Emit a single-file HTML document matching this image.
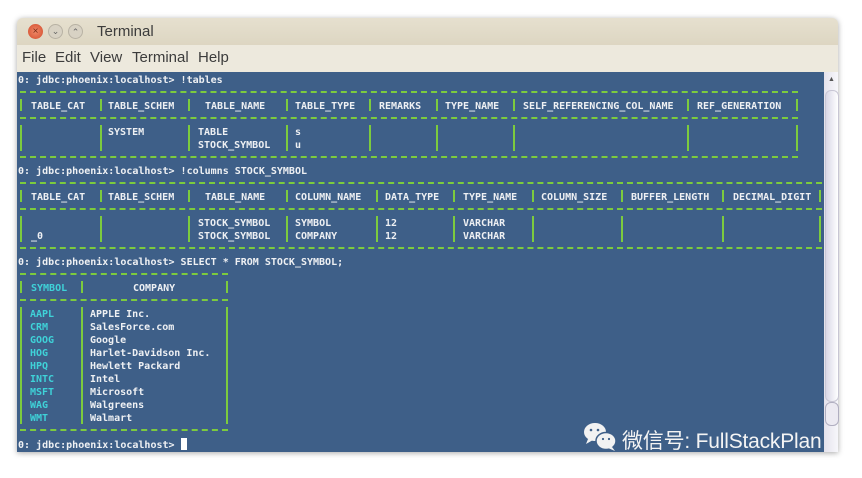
<!DOCTYPE html><html><head><meta charset="utf-8"><style>
body{margin:0;width:862px;height:478px;background:#fff;position:relative;overflow:hidden;font-family:"Liberation Sans",sans-serif}
#win{position:absolute;left:17px;top:18px;width:821px;height:434px;background:#ece8dc;border-radius:6px 6px 0 0;box-shadow:0 1px 6px rgba(0,0,0,.35)}
#title{position:absolute;left:0;top:0;width:821px;height:27px;background:linear-gradient(#e6e0cf,#ddd6c2);border-radius:6px 6px 0 0}
#menu{position:absolute;left:0;top:27px;width:821px;height:27px;background:#ede9dd;font-size:15px;color:#3c3c3c}
#term{position:absolute;left:17px;top:72px;width:807px;height:380px;background:#3e5f88;overflow:hidden;font-family:"DejaVu Sans Mono","Liberation Mono",monospace;font-weight:bold;font-size:10px;color:#eef0f3}
.t{position:absolute;line-height:13px;white-space:pre;margin-top:2px}
.c{color:#3fd2d8}
.h{position:absolute;height:0;border-top:2px dashed #7ccb3e}
.v{position:absolute;width:2px;background:#7ccb3e}
#sb{position:absolute;left:824px;top:72px;width:14px;height:380px;background:linear-gradient(90deg,#e4e2ec,#f7f7fb)}
</style></head><body>
<div id="win">
<div id="title">
<div style="position:absolute;left:11px;top:6px;width:15px;height:15px;border-radius:50%;background:radial-gradient(#f08a6a,#d24a2a);color:#7a2a15;font-size:10px;text-align:center;line-height:15px">×</div>
<div style="position:absolute;left:31px;top:6px;width:15px;height:15px;border-radius:50%;background:#d8d2c4;border:1px solid #b8b2a4;box-sizing:border-box;color:#666;font-size:9px;text-align:center;line-height:13px">⌄</div>
<div style="position:absolute;left:51px;top:6px;width:15px;height:15px;border-radius:50%;background:#d8d2c4;border:1px solid #b8b2a4;box-sizing:border-box;color:#666;font-size:9px;text-align:center;line-height:15px">⌃</div>
<div style="position:absolute;left:80px;top:5px;font-size:15px;color:#3c3c3c">Terminal</div>
</div>
<div id="menu"><span style="position:absolute;left:5px;top:4px">File</span><span style="position:absolute;left:38px;top:4px">Edit</span><span style="position:absolute;left:73px;top:4px">View</span><span style="position:absolute;left:115px;top:4px">Terminal</span><span style="position:absolute;left:181px;top:4px">Help</span></div>
</div>
<div id="sb"><div style="position:absolute;left:4px;top:4px;font-size:7px;color:#555">▲</div><div style="position:absolute;left:1px;top:18px;width:12px;height:310px;border-radius:6px;background:linear-gradient(90deg,#d9d7e6,#fff);border:1px solid #c8c6d4"></div><div style="position:absolute;left:1px;top:330px;width:12px;height:22px;border-radius:6px;background:#eceaf2;border:1px solid #b0aec0"></div></div>
<div id="term">
<div class="t" style="left:1px;top:0">0: jdbc:phoenix:localhost&gt; !tables</div>
<div class="h" style="left:3px;top:19px;width:778px"></div>
<div class="h" style="left:3px;top:45px;width:778px"></div>
<div class="h" style="left:3px;top:84px;width:778px"></div>
<div class="v" style="left:3px;top:27px;height:12px"></div><div class="v" style="left:83px;top:27px;height:12px"></div><div class="v" style="left:171px;top:27px;height:12px"></div><div class="v" style="left:269px;top:27px;height:12px"></div><div class="v" style="left:352px;top:27px;height:12px"></div><div class="v" style="left:419px;top:27px;height:12px"></div><div class="v" style="left:496px;top:27px;height:12px"></div><div class="v" style="left:670px;top:27px;height:12px"></div><div class="v" style="left:779px;top:27px;height:12px"></div>
<div class="v" style="left:3px;top:53px;height:26px"></div><div class="v" style="left:83px;top:53px;height:26px"></div><div class="v" style="left:171px;top:53px;height:26px"></div><div class="v" style="left:269px;top:53px;height:26px"></div><div class="v" style="left:352px;top:53px;height:26px"></div><div class="v" style="left:419px;top:53px;height:26px"></div><div class="v" style="left:496px;top:53px;height:26px"></div><div class="v" style="left:670px;top:53px;height:26px"></div><div class="v" style="left:779px;top:53px;height:26px"></div>
<div class="t" style="left:14px;top:26px">TABLE_CAT</div><div class="t" style="left:91px;top:26px">TABLE_SCHEM</div><div class="t" style="left:188px;top:26px">TABLE_NAME</div><div class="t" style="left:278px;top:26px">TABLE_TYPE</div><div class="t" style="left:362px;top:26px">REMARKS</div><div class="t" style="left:428px;top:26px">TYPE_NAME</div><div class="t" style="left:506px;top:26px">SELF_REFERENCING_COL_NAME</div><div class="t" style="left:680px;top:26px">REF_GENERATION</div>
<div class="t" style="left:91px;top:52px">SYSTEM</div><div class="t" style="left:181px;top:52px">TABLE
STOCK_SYMBOL</div><div class="t" style="left:278px;top:52px">s
u</div>
<div class="t" style="left:1px;top:91px">0: jdbc:phoenix:localhost&gt; !columns STOCK_SYMBOL</div>
<div class="h" style="left:3px;top:110px;width:802px"></div>
<div class="h" style="left:3px;top:136px;width:802px"></div>
<div class="h" style="left:3px;top:175px;width:802px"></div>
<div class="v" style="left:3px;top:118px;height:12px"></div><div class="v" style="left:83px;top:118px;height:12px"></div><div class="v" style="left:171px;top:118px;height:12px"></div><div class="v" style="left:269px;top:118px;height:12px"></div><div class="v" style="left:359px;top:118px;height:12px"></div><div class="v" style="left:436px;top:118px;height:12px"></div><div class="v" style="left:515px;top:118px;height:12px"></div><div class="v" style="left:604px;top:118px;height:12px"></div><div class="v" style="left:705px;top:118px;height:12px"></div><div class="v" style="left:802px;top:118px;height:12px"></div>
<div class="v" style="left:3px;top:144px;height:26px"></div><div class="v" style="left:83px;top:144px;height:26px"></div><div class="v" style="left:171px;top:144px;height:26px"></div><div class="v" style="left:269px;top:144px;height:26px"></div><div class="v" style="left:359px;top:144px;height:26px"></div><div class="v" style="left:436px;top:144px;height:26px"></div><div class="v" style="left:515px;top:144px;height:26px"></div><div class="v" style="left:604px;top:144px;height:26px"></div><div class="v" style="left:705px;top:144px;height:26px"></div><div class="v" style="left:802px;top:144px;height:26px"></div>
<div class="t" style="left:14px;top:117px">TABLE_CAT</div><div class="t" style="left:91px;top:117px">TABLE_SCHEM</div><div class="t" style="left:188px;top:117px">TABLE_NAME</div><div class="t" style="left:278px;top:117px">COLUMN_NAME</div><div class="t" style="left:368px;top:117px">DATA_TYPE</div><div class="t" style="left:446px;top:117px">TYPE_NAME</div><div class="t" style="left:524px;top:117px">COLUMN_SIZE</div><div class="t" style="left:614px;top:117px">BUFFER_LENGTH</div><div class="t" style="left:716px;top:117px">DECIMAL_DIGIT</div>
<div class="t" style="left:14px;top:156px">_0</div><div class="t" style="left:181px;top:143px">STOCK_SYMBOL
STOCK_SYMBOL</div><div class="t" style="left:278px;top:143px">SYMBOL
COMPANY</div><div class="t" style="left:368px;top:143px">12
12</div><div class="t" style="left:446px;top:143px">VARCHAR
VARCHAR</div>
<div class="t" style="left:1px;top:182px">0: jdbc:phoenix:localhost&gt; SELECT * FROM STOCK_SYMBOL;</div>
<div class="h" style="left:3px;top:201px;width:208px"></div>
<div class="h" style="left:3px;top:227px;width:208px"></div>
<div class="h" style="left:3px;top:357px;width:208px"></div>
<div class="v" style="left:3px;top:209px;height:12px"></div><div class="v" style="left:64px;top:209px;height:12px"></div><div class="v" style="left:209px;top:209px;height:12px"></div>
<div class="v" style="left:3px;top:235px;height:117px"></div><div class="v" style="left:64px;top:235px;height:117px"></div><div class="v" style="left:209px;top:235px;height:117px"></div>
<div class="t c" style="left:14px;top:208px">SYMBOL</div><div class="t" style="left:116px;top:208px">COMPANY</div>
<div class="t c" style="left:13px;top:234px">AAPL
CRM
GOOG
HOG
HPQ
INTC
MSFT
WAG
WMT</div>
<div class="t" style="left:73px;top:234px">APPLE Inc.
SalesForce.com
Google
Harlet-Davidson Inc.
Hewlett Packard
Intel
Microsoft
Walgreens
Walmart</div>
<div class="t" style="left:1px;top:364px">0: jdbc:phoenix:localhost&gt; <span style="display:inline-block;width:6px;height:12px;background:#fff;vertical-align:-2px"></span></div>
</div>
<svg style="position:absolute;left:583px;top:421px" width="36" height="32" viewBox="0 0 36 32"><ellipse cx="12" cy="11" rx="11" ry="9" fill="#f2f2f2"/><path d="M5 18 L3 23 L10 19Z" fill="#f2f2f2"/><ellipse cx="23" cy="20" rx="10" ry="8.5" fill="#f2f2f2" stroke="#3e5f88" stroke-width="1.5"/><path d="M29 26 L32 30 L25 27Z" fill="#f2f2f2"/><circle cx="8" cy="9" r="1.3" fill="#3e5f88"/><circle cx="15" cy="9" r="1.3" fill="#3e5f88"/><circle cx="20" cy="18" r="1.1" fill="#3e5f88"/><circle cx="26" cy="18" r="1.1" fill="#3e5f88"/></svg>
<div style="position:absolute;left:622px;top:425px;font-size:21px;letter-spacing:-0.2px;color:#f4f4f4;font-family:'Liberation Sans','Noto Sans CJK SC',sans-serif;white-space:nowrap">微信号: FullStackPlan</div>
</body></html>
